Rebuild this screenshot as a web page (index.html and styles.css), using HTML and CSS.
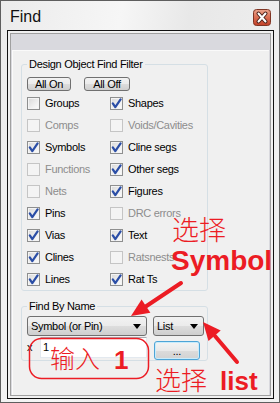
FILE: index.html
```html
<!DOCTYPE html>
<html lang="en">
<head>
  <meta charset="UTF-8" />
  <title>Find</title>
  <link rel="stylesheet" href="styles.css">
</head>
<body>
  <svg class="defs" width="0" height="0">
    <symbol id="tick" viewBox="0 0 11 11">
      <path d="M1.8 5.4 L4.3 9.2 L9.6 1.4" fill="none" stroke="#2b4ea6" stroke-width="2.2" stroke-linecap="round" stroke-linejoin="round" />
    </symbol>
  </svg>

  <div class="window">
    <div class="titlebar">
      <span class="title">Find</span>
      <span class="close">
        <svg width="18" height="17" viewBox="0 0 18 17">
          <defs>
            <linearGradient id="cg" x1="0" y1="0" x2="0" y2="1">
              <stop offset="0" stop-color="#eaa58e" />
              <stop offset="0.45" stop-color="#dc7257" />
              <stop offset="1" stop-color="#c23e26" />
            </linearGradient>
          </defs>
          <rect x="0.5" y="0.5" width="17" height="16" rx="3" fill="url(#cg)" stroke="#7f3524" />
          <path d="M5.5 4.5 L12.5 12.5 M12.5 4.5 L5.5 12.5" stroke="#4a2018" stroke-width="4" stroke-linecap="round" />
          <path d="M5.5 4.5 L12.5 12.5 M12.5 4.5 L5.5 12.5" stroke="#ffffff" stroke-width="2" stroke-linecap="round" />
        </svg>
      </span>
    </div>

    <div class="frame">
      <div class="client">
        <div class="panel">
          <fieldset class="group">
            <legend>Design Object Find Filter</legend>
            <div class="btn-row">
              <button class="btn on-btn">All On</button>
              <button class="btn off-btn">All Off</button>
            </div>
            <div class="checks">
              <div class="check"><span class="box"></span>Groups</div>
              <div class="check"><span class="box"><svg><use href="#tick" /></svg></span>Shapes</div>
              <div class="check dim"><span class="box"></span>Comps</div>
              <div class="check dim"><span class="box"></span>Voids/Cavities</div>
              <div class="check"><span class="box"><svg><use href="#tick" /></svg></span>Symbols</div>
              <div class="check"><span class="box"><svg><use href="#tick" /></svg></span>Cline segs</div>
              <div class="check dim"><span class="box"></span>Functions</div>
              <div class="check"><span class="box"><svg><use href="#tick" /></svg></span>Other segs</div>
              <div class="check dim"><span class="box"></span>Nets</div>
              <div class="check"><span class="box"><svg><use href="#tick" /></svg></span>Figures</div>
              <div class="check"><span class="box"><svg><use href="#tick" /></svg></span>Pins</div>
              <div class="check dim"><span class="box"></span>DRC errors</div>
              <div class="check"><span class="box"><svg><use href="#tick" /></svg></span>Vias</div>
              <div class="check"><span class="box"><svg><use href="#tick" /></svg></span>Text</div>
              <div class="check"><span class="box"><svg><use href="#tick" /></svg></span>Clines</div>
              <div class="check dim"><span class="box"></span>Ratsnests</div>
              <div class="check"><span class="box"><svg><use href="#tick" /></svg></span>Lines</div>
              <div class="check"><span class="box"><svg><use href="#tick" /></svg></span>Rat Ts</div>
            </div>
          </fieldset>

          <fieldset class="group byname">
            <legend>Find By Name</legend>
            <div class="sel-row">
              <div class="select wide">Symbol (or Pin)<span class="arrow"></span></div>
              <div class="select narrow">List<span class="arrow"></span></div>
            </div>
            <div class="name-row">
              <span class="xlabel">x</span>
              <div class="textbox">1</div>
              <button class="btn more">...</button>
            </div>
          </fieldset>
        </div>
      </div>
    </div>
  </div>

  <!-- red annotations drawn over the dialog -->
  <svg class="marks" width="280" height="403" viewBox="0 0 280 403">
    <rect x="29.5" y="338.5" width="119" height="40" rx="12" fill="none" stroke="#ec1c24" stroke-width="1.5" />
    <line x1="181" y1="283" x2="145" y2="307" stroke="#ec1c24" stroke-width="4" stroke-linecap="round" />
    <polygon points="131,316 150.4,312.8 141.6,299.4" fill="#ec1c24" />
    <line x1="237" y1="362" x2="215" y2="336" stroke="#ec1c24" stroke-width="4" stroke-linecap="round" />
    <polygon points="203,322 220.7,330.5 208.5,340.9" fill="#ec1c24" />
  </svg>
  <div class="note cn pick-top">选择</div>
  <div class="note en sym">Symbol</div>
  <div class="note cn type">输入</div>
  <div class="note en one">1</div>
  <div class="note cn pick-bottom">选择</div>
  <div class="note en list">list</div>
</body>
</html>
```

FILE: styles.css
```css
* {
  box-sizing: border-box;
}

body {
  margin: 0;
  width: 280px;
  height: 403px;
  overflow: hidden;
  position: relative;
  font-family: "Liberation Sans", Arial, sans-serif;
  font-size: 11px;
  color: #000;
  background: #f0f0f0;
}

.defs {
  position: absolute;
}

.window {
  height: 403px;
  display: flex;
  flex-direction: column;
  padding: 0 5px 3px 6px;
  border: 1px solid #5e5e5e;
  background: linear-gradient(100deg, #ebebeb 0%, #f6f6f6 35%, #e8e8e8 55%, #f2f2f2 100%);
}

.titlebar {
  height: 29px;
  display: flex;
  align-items: flex-start;
  justify-content: space-between;
  padding: 7px 3px 0 3px;
}

.title {
  font-size: 16px;
  line-height: 18px;
  color: #111;
}

.close {
  margin-top: 1px;
  width: 18px;
  height: 17px;
}

.close svg {
  display: block;
}

.frame {
  flex: 1;
  display: flex;
  padding: 2px;
  border: 1px solid #111;
  background: #f0f0f0;
}

.client {
  flex: 1;
  display: flex;
  padding: 16px 1px 0 1px;
  border: 1px solid #a0a0a0;
  background: #d9d9de;
}

.panel {
  flex: 1;
  padding: 0 0 0 8px;
  background: #f0f0f0;
  border-top: 1px solid #fafafa;
  border-left: 1px solid #fafafa;
}

.group {
  width: 187px;
  margin: 7px 0 0 0;
  padding: 0 3px 0 5px;
  border: 1px solid #d5dfe5;
  border-radius: 3px;
}

.group legend {
  padding: 0 2px;
  line-height: 13px;
  letter-spacing: -0.3px;
}

.btn-row {
  display: flex;
  gap: 13px;
  margin-top: 6px;
}

.btn {
  height: 14px;
  padding: 0;
  font-family: inherit;
  font-size: 11px;
  line-height: 12px;
  letter-spacing: -0.3px;
  color: #000;
  border: 1px solid #707070;
  border-radius: 3px;
  background: linear-gradient(#f2f2f2 0%, #ebebeb 50%, #dddddd 50%, #cfcfcf 100%);
}

.on-btn {
  width: 44px;
}

.off-btn {
  width: 46px;
}

.checks {
  display: grid;
  grid-template-columns: 83px 1fr;
  grid-auto-rows: 22px;
  margin-top: 1px;
}

.check {
  display: flex;
  align-items: center;
  white-space: nowrap;
  letter-spacing: -0.3px;
}

.box {
  width: 13px;
  height: 13px;
  margin-right: 5px;
  flex: none;
  border: 1px solid #8e8f8f;
  background: linear-gradient(135deg, #d8d8d8 0%, #f0f0f0 60%, #fdfdfd 100%);
  box-shadow: inset 0 0 0 1px #f4f4f4;
}

.box svg {
  display: block;
  width: 11px;
  height: 11px;
}

.dim {
  color: #8d8d8d;
}

.dim .box {
  border-color: #c5c5c5;
  background: #f4f4f4;
  box-shadow: none;
}

.byname {
  margin-top: 9px;
  padding-bottom: 0;
}

.sel-row {
  display: flex;
  gap: 6px;
  margin-top: 3px;
}

.select {
  height: 20px;
  display: flex;
  align-items: center;
  justify-content: space-between;
  padding: 0 5px 0 3px;
  letter-spacing: -0.3px;
  border: 1px solid #707070;
  border-radius: 3px;
  background: linear-gradient(#f2f2f2 0%, #ebebeb 50%, #dddddd 50%, #cfcfcf 100%);
}

.wide {
  width: 120px;
}

.narrow {
  width: 51px;
}

.arrow {
  width: 0;
  height: 0;
  border-style: solid;
  border-width: 5px 4.5px 0 4.5px;
  border-color: #000 transparent transparent transparent;
}

.name-row {
  display: flex;
  align-items: flex-start;
  margin-top: 1px;
}

.xlabel {
  width: 13px;
  padding-top: 4px;
}

.textbox {
  width: 107px;
  height: 21px;
  padding: 3px 0 0 2px;
  background: #fff;
  border: 1px solid #e3e9ef;
  border-top-color: #abadb3;
}

.more {
  width: 46px;
  height: 19px;
  margin: 4px 0 0 7px;
  border-color: #4ea4d6;
  box-shadow: inset 0 0 0 1px #c8ecfc;
  background: linear-gradient(#f4f4f4 0%, #e9e9e9 50%, #dcdcdc 50%, #d2d2d2 100%);
}

.marks {
  position: absolute;
  top: 0;
  left: 0;
}

.note {
  position: absolute;
  color: #ec1c24;
  line-height: 1;
  white-space: nowrap;
}

.cn {
  font-family: "Noto Sans CJK SC", sans-serif;
  font-weight: 300;
}

.en {
  font-family: "Liberation Sans", Arial, sans-serif;
  font-weight: bold;
}

.pick-top {
  left: 172px;
  top: 215px;
  font-size: 27px;
}

.sym {
  left: 171px;
  top: 247px;
  font-size: 28px;
}

.type {
  left: 50px;
  top: 345px;
  font-size: 25px;
}

.one {
  left: 114px;
  top: 347px;
  font-size: 26px;
}

.pick-bottom {
  left: 155px;
  top: 366px;
  font-size: 26px;
}

.list {
  left: 220px;
  top: 368px;
  font-size: 26px;
}
```
